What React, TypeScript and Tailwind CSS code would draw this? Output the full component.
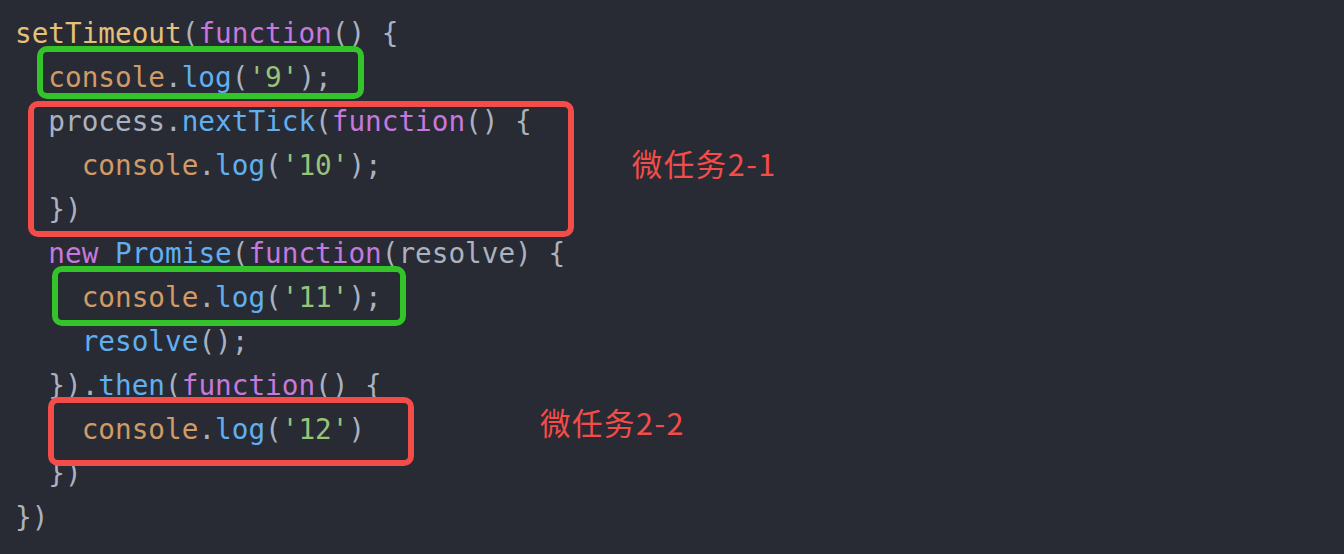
import type { ReactNode } from "react";

const C = {
  yellow: "text-[#e5c07b]",
  purple: "text-[#c678dd]",
  gray: "text-[#abb2bf]",
  orange: "text-[#d19a66]",
  blue: "text-[#61afef]",
  green: "text-[#98c379]",
};

type Tok = [string, string];
type Row = { toks: Tok[]; note?: ReactNode };

const note = "font-['Noto_Sans_CJK_SC',sans-serif] text-[30.5px] tracking-[1.5px] text-[#f44c49] leading-[40px] inline-block relative";

const rows: Row[] = [
  { toks: [["setTimeout", C.yellow], ["(", C.gray], ["function", C.purple], ["() {", C.gray]] },
  { toks: [["  ", C.gray], ["console", C.orange], [".", C.gray], ["log", C.blue], ["(", C.gray], ["'9'", C.green], [");", C.gray]] },
  { toks: [["  process.", C.gray], ["nextTick", C.blue], ["(", C.gray], ["function", C.purple], ["() {", C.gray]] },
  {
    toks: [["    ", C.gray], ["console", C.orange], [".", C.gray], ["log", C.blue], ["(", C.gray], ["'10'", C.green], [");", C.gray]],
    note: <span className={`${note} ml-[250px] -top-[3px]`}>微任务2-1</span>,
  },
  { toks: [["  })", C.gray]] },
  { toks: [["  ", C.gray], ["new", C.purple], [" ", C.gray], ["Promise", C.blue], ["(", C.gray], ["function", C.purple], ["(resolve) {", C.gray]] },
  { toks: [["    ", C.gray], ["console", C.orange], [".", C.gray], ["log", C.blue], ["(", C.gray], ["'11'", C.green], [");", C.gray]] },
  { toks: [["    ", C.gray], ["resolve", C.blue], ["();", C.gray]] },
  { toks: [["  }).", C.gray], ["then", C.blue], ["(", C.gray], ["function", C.purple], ["() {", C.gray]] },
  {
    toks: [["    ", C.gray], ["console", C.orange], [".", C.gray], ["log", C.blue], ["(", C.gray], ["'12'", C.green], [")", C.gray]],
    note: <span className={`${note} ml-[175px] -top-[8px]`}>微任务2-2</span>,
  },
  { toks: [["  })", C.gray]] },
  { toks: [["})", C.gray]] },
];

function Line({ row }: { row: Row }) {
  return (
    <div className="flex items-center h-[44px] leading-[44px] whitespace-pre">
      <code className="font-['DejaVu_Sans_Mono',monospace]">
        {row.toks.map(([t, c], i) => (
          <span key={i} className={c}>
            {t}
          </span>
        ))}
      </code>
      {row.note}
    </div>
  );
}

export default function App() {
  return (
    <main className="w-[1344px] h-[554px] bg-[#282b34] overflow-hidden">
      <div className="relative pt-[12px] pl-[15px] text-[27.7px]">
        {rows.map((r, i) => (
          <Line key={i} row={r} />
        ))}

        {/* annotation boxes drawn over the code */}
        <div className="absolute left-[37px] top-[46px] w-[327px] h-[53px] border-[6px] border-[#33c42a] rounded-[10px]" />
        <div className="absolute left-[28px] top-[101px] w-[546px] h-[136px] border-[6px] border-[#f44c49] rounded-[10px]" />
        <div className="absolute left-[52px] top-[266px] w-[354px] h-[60px] border-[6px] border-[#33c42a] rounded-[10px]" />
        <div className="absolute left-[48px] top-[397px] w-[366px] h-[69px] border-[6px] border-[#f44c49] rounded-[10px]" />
      </div>
    </main>
  );
}
